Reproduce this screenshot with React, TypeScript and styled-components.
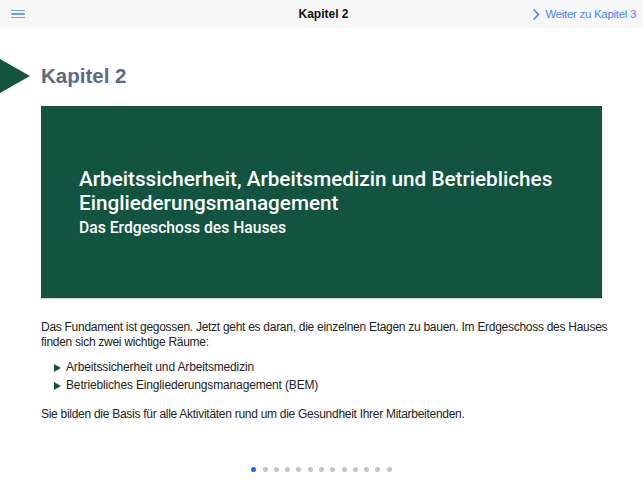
import React from "react";
import styled, { createGlobalStyle } from "styled-components";

const Global = createGlobalStyle`
  html, body { margin: 0; padding: 0; background: #ffffff; }
  body { font-family: "Liberation Sans", Arial, sans-serif; -webkit-font-smoothing: antialiased; }
  * { box-sizing: border-box; }
`;

const Page = styled.div`
  width: 643px;
  height: 482px;
  position: relative;
  overflow: hidden;
  background: #fff;
`;

const TopBar = styled.header`
  height: 28px;
  background: #f7f7f7;
  display: grid;
  grid-template-columns: 1fr auto 1fr;
  align-items: center;
  padding: 0 7px 0 11px;
`;

const MenuButton = styled.button`
  border: 0;
  background: none;
  padding: 0;
  width: 14px;
  height: 14px;
  display: flex;
  flex-direction: column;
  justify-content: center;
  gap: 2px;
  justify-self: start;
`;

const MenuLine = styled.span`
  display: block;
  height: 1.5px;
  width: 14px;
  background: #6f9ff3;
  border-radius: 1px;
`;

const BarTitle = styled.div`
  font-size: 12px;
  font-weight: 700;
  color: #111;
`;

const NextLink = styled.a`
  justify-self: end;
  display: flex;
  align-items: center;
  gap: 5px;
  color: #4b86f0;
  font-size: 11.5px;
  letter-spacing: -0.3px;
  text-decoration: none;
`;

const Main = styled.main`
  padding: 31px 41px 0 0;
`;

const TitleRow = styled.div`
  display: flex;
  align-items: center;
  gap: 11px;
`;

const Arrow = styled.div`
  width: 0;
  height: 0;
  border-top: 17.5px solid transparent;
  border-bottom: 17.5px solid transparent;
  border-left: 30px solid #12543f;
`;

const ChapterTitle = styled.h1`
  margin: 0;
  font-size: 20.5px;
  font-weight: 700;
  color: #5b6b80;
`;

const Body = styled.div`
  padding-left: 41px;
`;

const Hero = styled.section`
  margin-top: 13px;
  height: 192px;
  background: #12543f;
  box-shadow: 0 1px 0 #c9d4cf;
  display: flex;
  flex-direction: column;
  justify-content: center;
  padding: 0 38px;
  color: #fff;
`;

const HeroTitle = styled.h2`
  margin: 0;
  font-family: Roboto, "Liberation Sans", sans-serif;
  font-size: 20.7px;
  line-height: 24px;
  font-weight: 500;
`;

const HeroSub = styled.h3`
  margin: 3px 0 0;
  font-family: Roboto, "Liberation Sans", sans-serif;
  font-size: 15.7px;
  line-height: 20px;
  font-weight: 500;
`;

const Text = styled.p<{ $top?: number }>`
  margin: ${(p) => p.$top ?? 0}px 0 0;
  font-size: 12px;
  letter-spacing: -0.28px;
  line-height: 15px;
  color: #222;
  white-space: nowrap;
`;

const List = styled.ul`
  list-style: none;
  margin: 10px 0 0;
  padding: 0 0 0 13px;
  display: flex;
  flex-direction: column;
  gap: 3px;
`;

const Item = styled.li`
  display: flex;
  align-items: center;
  gap: 5px;
  font-size: 12px;
  letter-spacing: -0.15px;
  line-height: 15px;
  color: #222;
`;

const Bullet = styled.span`
  width: 0;
  height: 0;
  border-top: 4px solid transparent;
  border-bottom: 4px solid transparent;
  border-left: 7px solid #12543f;
`;

const Dots = styled.div`
  position: absolute;
  left: 0;
  right: 0;
  top: 467px;
  display: flex;
  justify-content: center;
  gap: 6.3px;
`;

const Dot = styled.span<{ $active?: boolean }>`
  width: 5px;
  height: 5px;
  border-radius: 50%;
  background: ${(p) => (p.$active ? "#1666f0" : "#c4c4c4")};
`;

export default function App() {
  return (
    <Page>
      <Global />
      <TopBar>
        <MenuButton aria-label="Menü">
          <MenuLine />
          <MenuLine />
          <MenuLine />
        </MenuButton>
        <BarTitle>Kapitel 2</BarTitle>
        <NextLink href="#">
          <svg width="7" height="11" viewBox="0 0 7 11">
            <path d="M1.2 1 L5.5 5.5 L1.2 10" fill="none" stroke="#4b86f0" strokeWidth="1.8" strokeLinecap="round" strokeLinejoin="round" />
          </svg>
          Weiter zu Kapitel 3
        </NextLink>
      </TopBar>
      <Main>
        <TitleRow>
          <Arrow />
          <ChapterTitle>Kapitel 2</ChapterTitle>
        </TitleRow>
        <Body>
          <Hero>
            <HeroTitle>
              Arbeitssicherheit, Arbeitsmedizin und Betriebliches
              <br />
              Eingliederungsmanagement
            </HeroTitle>
            <HeroSub>Das Erdgeschoss des Hauses</HeroSub>
          </Hero>
          <Text $top={22}>
            Das Fundament ist gegossen. Jetzt geht es daran, die einzelnen Etagen zu bauen. Im Erdgeschoss des Hauses
            <br />
            finden sich zwei wichtige Räume:
          </Text>
          <List>
            <Item>
              <Bullet />
              Arbeitssicherheit und Arbeitsmedizin
            </Item>
            <Item>
              <Bullet />
              Betriebliches Eingliederungsmanagement (BEM)
            </Item>
          </List>
          <Text $top={14}>Sie bilden die Basis für alle Aktivitäten rund um die Gesundheit Ihrer Mitarbeitenden.</Text>
        </Body>
      </Main>
      <Dots>
        {Array.from({ length: 13 }).map((_, i) => (
          <Dot key={i} $active={i === 0} />
        ))}
      </Dots>
    </Page>
  );
}
